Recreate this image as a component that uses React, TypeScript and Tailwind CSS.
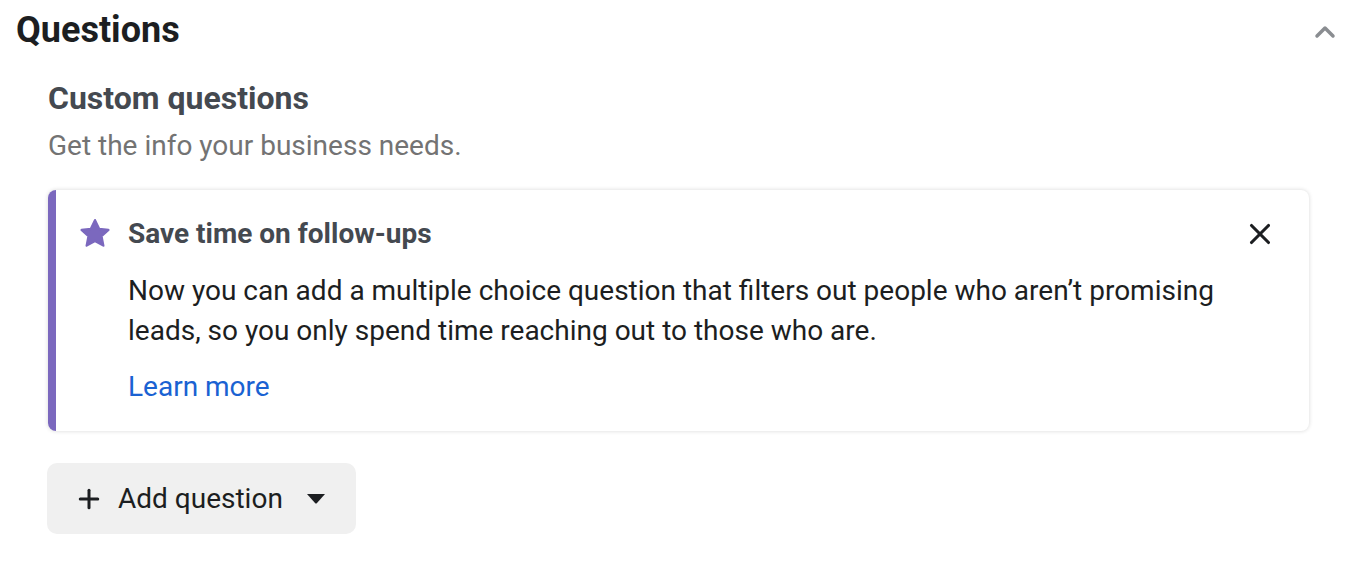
import { X, Plus } from 'lucide-react';

export default function App() {
  return (
    <div className="w-[1364px] h-[562px] bg-white font-['Roboto',sans-serif] overflow-hidden">
      <div className="flex items-center justify-between pl-4 pr-7 pt-[10px]">
        <h1 className="text-[36px] leading-[40px] font-bold text-[#1c1e21]">Questions</h1>
        <svg width="22" height="14" viewBox="0 0 22 14" className="mt-1">
          <path d="M3 11 L11 3 L19 11" fill="none" stroke="#8a8d91" strokeWidth="3.5" strokeLinecap="round" strokeLinejoin="round" />
        </svg>
      </div>

      <div className="pl-12 pr-[55px]">
        <h2 className="mt-[28px] text-[32px] leading-[40px] font-bold text-[#444950]">Custom questions</h2>
        <p className="mt-[10px] text-[28px] leading-[36px] text-[#737373]">Get the info your business needs.</p>

        {/* tip card */}
        <div className="mt-[26px] flex rounded-lg overflow-hidden shadow-[0_0_4px_rgba(0,0,0,0.16)] bg-white">
          <div className="w-2 bg-[#7b68be]" />
          <div className="flex-1 flex pl-[22px] pr-[32px] pt-[28px] pb-[28px]">
            <svg width="34" height="34" viewBox="0 0 24 24" className="-mt-[1px] shrink-0">
              <path
                d="M12 2.2 L14.9 8.3 L21.5 9.1 L16.6 13.6 L17.9 20.2 L12 16.9 L6.1 20.2 L7.4 13.6 L2.5 9.1 L9.1 8.3 Z"
                fill="#7b68be"
                stroke="#7b68be"
                strokeWidth="1.6"
                strokeLinejoin="round"
              />
            </svg>
            <div className="flex-1 ml-[16px]">
              <div className="flex items-start justify-between">
                <h3 className="text-[28px] leading-[32px] font-bold text-[#444950]">Save time on follow-ups</h3>
                <X size={34} strokeWidth={2.2} className="text-[#1c1e21] -mt-[1px]" />
              </div>
              <p className="mt-[20px] text-[28px] leading-[40px] text-[#1c1e21] max-w-[1130px]">
                Now you can add a multiple choice question that filters out people who aren’t promising leads, so you only spend time reaching out to those who are.
              </p>
              <a className="block mt-[20px] text-[28px] leading-[32px] text-[#1a62d2]">Learn more</a>
            </div>
          </div>
        </div>

        <button className="mt-[32px] h-[71px] w-[309px] -ml-[1px] flex items-center rounded-[10px] bg-[#f0f0f0] pl-[27px]">
          <Plus size={30} strokeWidth={2.4} className="text-[#1c1e21]" />
          <span className="ml-[14px] text-[28px] text-[#1c1e21]">Add question</span>
          <svg width="20" height="12" viewBox="0 0 20 12" className="ml-[23px]">
            <path d="M1 1 H19 L11 10 Q10 11 9 10 Z" fill="#1c1e21" />
          </svg>
        </button>
      </div>
    </div>
  );
}
